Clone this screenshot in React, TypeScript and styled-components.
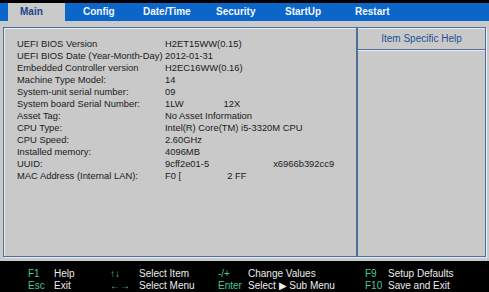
import React from 'react'
import styled, { createGlobalStyle } from 'styled-components'

const GlobalStyle = createGlobalStyle`
  html, body { margin: 0; padding: 0; background: #000; }
  body { font-family: "Liberation Sans", Arial, sans-serif; }
`

const Screen = styled.div`
  width: 489px;
  height: 292px;
  background: #000;
  display: flex;
  flex-direction: column;
  overflow: hidden;
`

const TabBar = styled.div`
  margin-top: 3px;
  height: 18px;
  background: #0a66c8;
  display: flex;
  padding-left: 8px;
`

const Tab = styled.div<{ $w: number; $pl: number; $active?: boolean }>`
  width: ${(p) => p.$w}px;
  padding-left: ${(p) => p.$pl}px;
  box-sizing: border-box;
  font-size: 10px;
  font-weight: bold;
  line-height: 18px;
  color: ${(p) => (p.$active ? '#17468a' : '#f2f6ff')};
  background: ${(p) => (p.$active ? '#cacaca' : 'transparent')};
`

const Body = styled.div`
  height: 240px;
  background: #c9c9c9;
  padding: 6px 3px 4px 3px;
  box-sizing: border-box;
`

const Frame = styled.div`
  height: 100%;
  box-sizing: border-box;
  border: 1px solid #4d6f9e;
  box-shadow: inset 1px 1px 0 #e6ecf3, 1px 1px 0 #e6ecf3;
  display: grid;
  grid-template-columns: 354px 1fr;
`

const InfoPanel = styled.div`
  padding: 10px 0 0 13px;
  border-right: 2px solid #4d6f9e;
`

const Row = styled.div`
  display: flex;
  height: 12px;
  font-size: 9.4px;
  line-height: 12px;
  color: #1a1a1a;
`

const Label = styled.div`
  width: 148px;
  flex: none;
  white-space: nowrap;
`

const Value = styled.div`
  white-space: nowrap;
`

const Gap = styled.span<{ $w: number }>`
  display: inline-block;
  width: ${(p) => p.$w}px;
`

const HelpPanel = styled.div`
  display: flex;
  flex-direction: column;
`

const HelpHeader = styled.div`
  height: 21px;
  border-bottom: 1px solid #4d6f9e;
  box-shadow: 0 1px 0 #e6ecf3;
  text-align: center;
  font-size: 10px;
  line-height: 21px;
  color: #1f4f95;
`

const Footer = styled.div`
  flex: 1;
  background: #000;
  padding: 7px 0 0 28px;
  display: grid;
  grid-template-columns: 26px 56px 29px 79px 30px 117px 23px 1fr;
  grid-auto-rows: 12px;
  font-size: 10px;
  line-height: 12px;
`

const Key = styled.div`
  color: #45c79c;
  white-space: nowrap;
`

const Desc = styled.div`
  color: #ececec;
  white-space: nowrap;
`

const tabs = [
  { name: 'Main', w: 57, pl: 12, active: true },
  { name: 'Config', w: 69, pl: 18 },
  { name: 'Date/Time', w: 70, pl: 9 },
  { name: 'Security', w: 72, pl: 12 },
  { name: 'StartUp', w: 66, pl: 9 },
  { name: 'Restart', w: 80, pl: 13 },
]

const rows: [string, React.ReactNode][] = [
  ['UEFI BIOS Version', 'H2ET15WW(0.15)'],
  ['UEFI BIOS Date (Year-Month-Day)', '2012-01-31'],
  ['Embedded Controller version', 'H2EC16WW(0.16)'],
  ['Machine Type Model:', '14'],
  ['System-unit serial number:', '09'],
  ['System board Serial Number:', <>1LW<Gap $w={40} />12X</>],
  ['Asset Tag:', 'No Asset Information'],
  ['CPU Type:', 'Intel(R) Core(TM) i5-3320M CPU'],
  ['CPU Speed:', '2.60GHz'],
  ['Installed memory:', '4096MB'],
  ['UUID:', <>9cff2e01-5<Gap $w={64} />x6966b392cc9</>],
  ['MAC Address (Internal LAN):', <>F0 [<Gap $w={46} />2 FF</>],
]

const keys: [string, string][] = [
  ['F1', 'Help'],
  ['\u2191\u2193', 'Select Item'],
  ['-/+', 'Change Values'],
  ['F9', 'Setup Defaults'],
  ['Esc', 'Exit'],
  ['\u2190\u2192', 'Select Menu'],
  ['Enter', 'Select \u25B6 Sub Menu'],
  ['F10', 'Save and Exit'],
]

export default function App() {
  return (
    <Screen>
      <GlobalStyle />
      <TabBar>
        {tabs.map((t) => (
          <Tab key={t.name} $w={t.w} $pl={t.pl} $active={t.active}>
            {t.name}
          </Tab>
        ))}
      </TabBar>
      <Body>
        <Frame>
          <InfoPanel>
            {rows.map(([label, value]) => (
              <Row key={label}>
                <Label>{label}</Label>
                <Value>{value}</Value>
              </Row>
            ))}
          </InfoPanel>
          <HelpPanel>
            <HelpHeader>Item Specific Help</HelpHeader>
          </HelpPanel>
        </Frame>
      </Body>
      <Footer>
        {keys.map(([k, d]) => (
          <React.Fragment key={k}>
            <Key>{k}</Key>
            <Desc>{d}</Desc>
          </React.Fragment>
        ))}
      </Footer>
    </Screen>
  )
}
